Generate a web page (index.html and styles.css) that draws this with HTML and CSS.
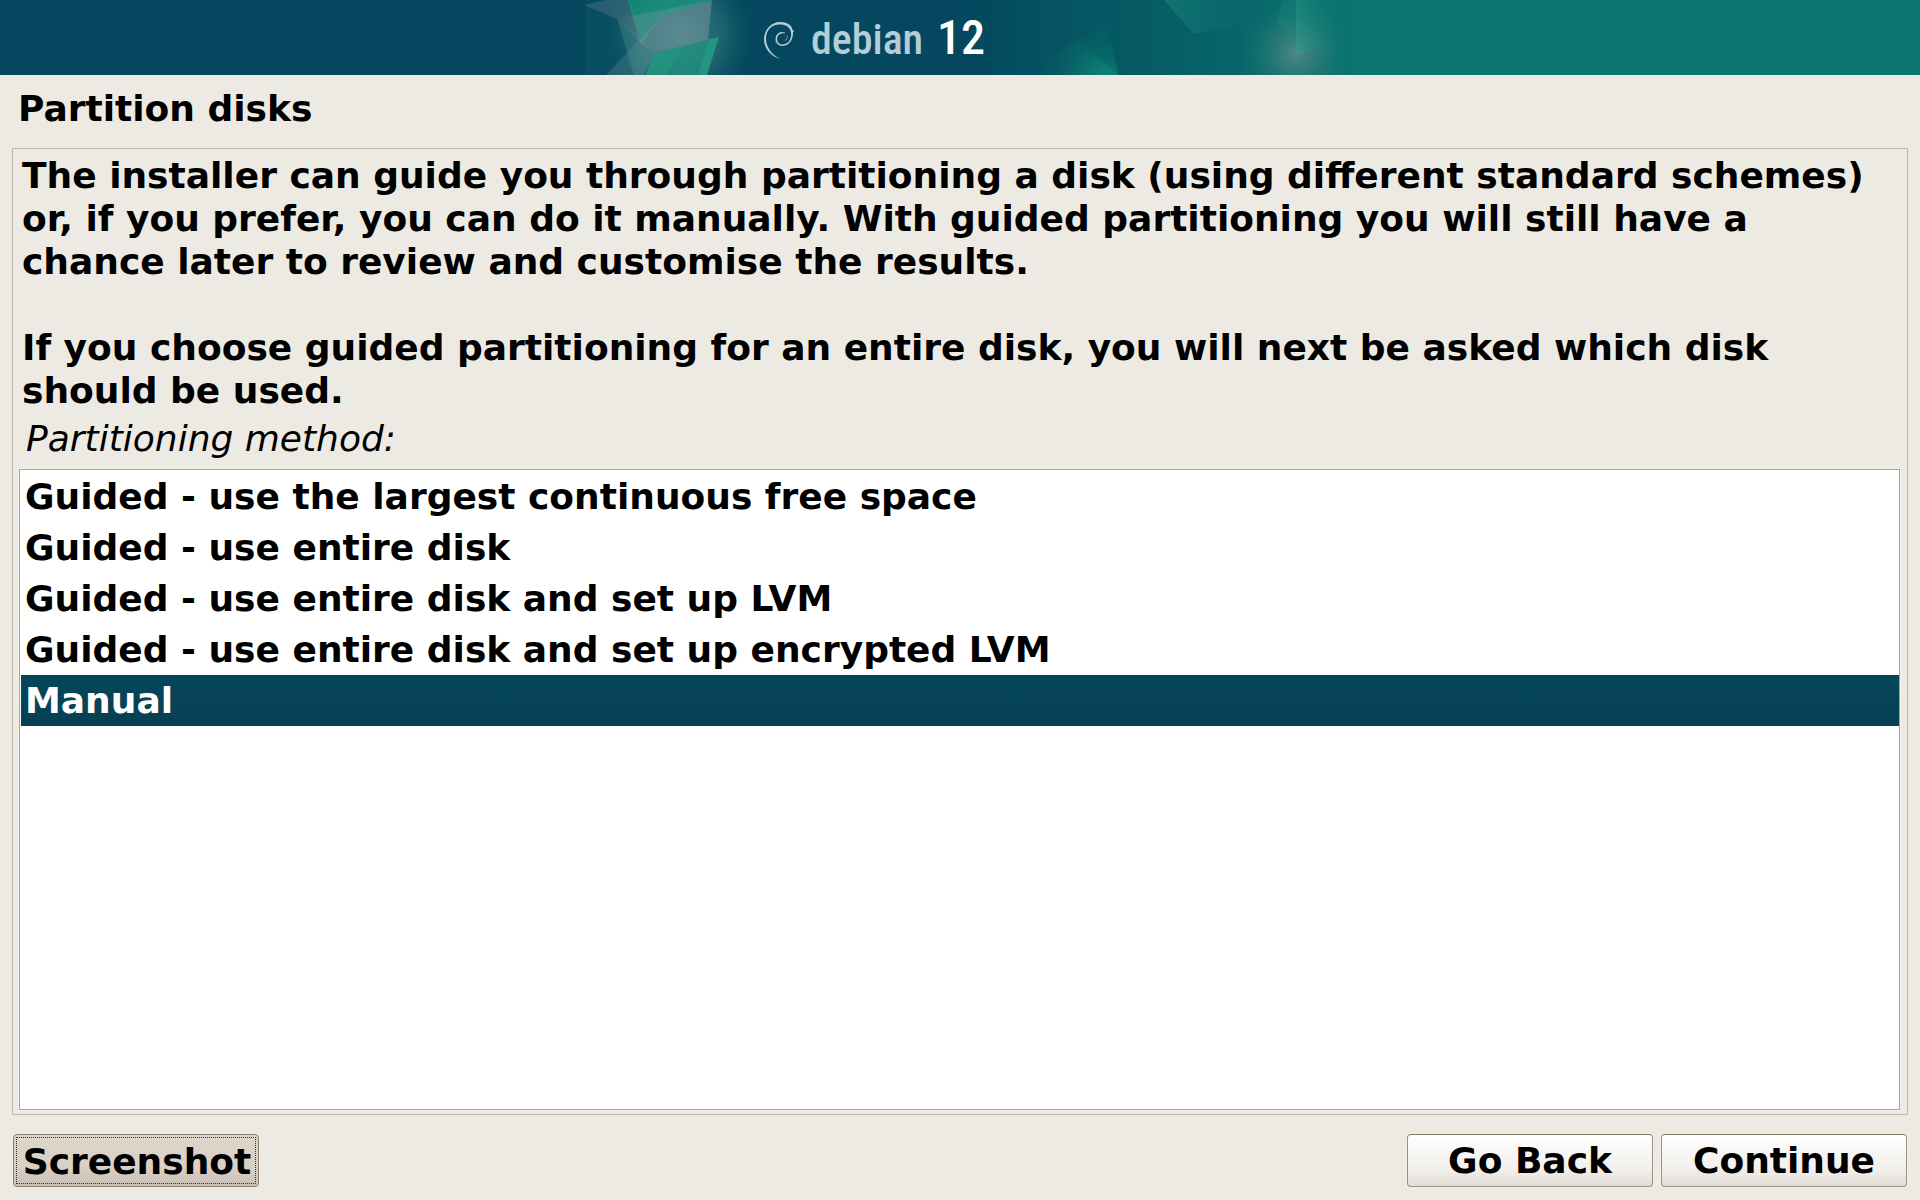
FILE: index.html
```html
<!DOCTYPE html>
<html lang="en-GB">
<head>
<meta charset="utf-8">
<meta name="viewport" content="width=device-width, initial-scale=1">
<title>Partition disks</title>
<link rel="stylesheet" href="styles.css">
</head>
<body>
<header class="banner">
  <svg class="banner-art" viewBox="0 0 800 75" role="img" aria-label="debian 12">
    <defs>
      <linearGradient id="base" x1="0" y1="0" x2="1" y2="0">
        <stop offset="0" stop-color="#04475e"/>
        <stop offset=".5" stop-color="#04475e"/>
        <stop offset=".62" stop-color="#055361"/>
        <stop offset=".8" stop-color="#076168"/>
        <stop offset="1" stop-color="#0b7570"/>
      </linearGradient>
      <radialGradient id="haze" gradientUnits="userSpaceOnUse" cx="120" cy="35" r="85">
        <stop offset="0" stop-color="#3d8a86" stop-opacity=".85"/>
        <stop offset=".5" stop-color="#2a7378" stop-opacity=".65"/>
        <stop offset="1" stop-color="#04475e" stop-opacity="0"/>
      </radialGradient>
      <radialGradient id="glow" gradientUnits="userSpaceOnUse" cx="736" cy="53" r="58">
        <stop offset="0" stop-color="#5b8d87" stop-opacity=".85"/>
        <stop offset=".5" stop-color="#3f837f" stop-opacity=".4"/>
        <stop offset="1" stop-color="#0b7570" stop-opacity="0"/>
      </radialGradient>
      <radialGradient id="spark" gradientUnits="userSpaceOnUse" cx="545" cy="78" r="70">
        <stop offset="0" stop-color="#0f9178" stop-opacity=".85"/>
        <stop offset="1" stop-color="#07616a" stop-opacity="0"/>
      </radialGradient>
      <linearGradient id="beam" x1="0" y1="0" x2="1" y2="0">
        <stop offset="0" stop-color="#219a85" stop-opacity=".4"/>
        <stop offset="1" stop-color="#0b7570" stop-opacity="0"/>
      </linearGradient>
      <linearGradient id="lit" x1="0" y1="0" x2="1" y2="0">
        <stop offset="0" stop-color="#2ba38c" stop-opacity=".45"/>
        <stop offset="1" stop-color="#0b7570" stop-opacity="0"/>
      </linearGradient>
    </defs>
    <rect width="800" height="75" fill="url(#base)"/>
    <rect x="25" width="70" height="75" fill="#0c6068" opacity=".3"/>
    <rect x="25" width="190" height="75" fill="url(#haze)"/>
    <path d="M24 5 45 0h24l6 16-18 3z" fill="#587b8d" opacity=".4"/>
    <path d="M68 0h84L101 17 81 45z" fill="#189c7e" opacity=".65"/>
    <path d="M57 19 152 0l-4 40-54 13-15-12z" fill="#8799a4" opacity=".3"/>
    <path d="M57 19 94 53l-11-8z" fill="#72909b" opacity=".4"/>
    <path d="M101 17 152 0l-4 40-54 13-11 22H46z" fill="#819da5" opacity=".25"/>
    <path d="m57 19 26 26 11 8-6 22H74z" fill="#4a9590" opacity=".35"/>
    <path d="m94 53 65-16-12 38H86z" fill="#22957f" opacity=".7"/>
    <path d="m124 46-18 29H86l8-22z" fill="#25a485" opacity=".35"/>
    <path d="m159 37-12 38h-9l11-36z" fill="#26ad86" opacity=".4"/>
    <path d="m455 75 63-35 28-19 13 54z" fill="url(#spark)"/>
    <path d="m546 21 13 54-41-35z" fill="#075761" opacity=".35"/>
    <path d="M604 0h95l-8 24-57 10z" fill="url(#beam)"/>
    <path d="M660 0h140v75H660z" fill="url(#glow)"/>
    <path d="M723 0h13v53l-19-31z" fill="#25907e" opacity=".25"/>
    <path d="M736 0h40l14 41-54 14z" fill="url(#lit)"/>
    <g fill="#b4ced7">
      <path d="M220.500 59C210 56 204 48 204 39.500 204 30 211 22 220 22c7 0 12 3 12.500 8l1.500 1-1 1.500c0 8-4 13.500-11 13.500-8-1-9-13 0-14l3 .6-.2.800c-10-1-9.500 11-2.800 11 6 0 10-5 9-12C230 27 226 24.500 219.500 24.500c-8 0-13.500 6-13.500 14 0 8 5 16 14.500 20.500z"/>
      <path d="M216 41l2 4-3-3zM227 35l1 1-1 4-3 1 2-2z" opacity=".45"/>
    </g>
    <text class="brand" x="251" y="54">debian</text>
    <text class="release" x="377" y="54">12</text>
  </svg>
</header>
<form class="installer">
  <h1 class="title">Partition disks</h1>
  <main class="panel">
    <div class="description">
      <p>The installer can guide you through partitioning a disk (using different standard schemes) or, if you prefer, you can do it manually. With guided partitioning you will still have a chance later to review and customise the results.</p>
      <p>If you choose guided partitioning for an entire disk, you will next be asked which disk should be used.</p>
    </div>
    <label class="question" for="method">Partitioning method:</label>
    <select class="choices" id="method" name="method" size="5">
      <option>Guided - use the largest continuous free space</option>
      <option>Guided - use entire disk</option>
      <option>Guided - use entire disk and set up LVM</option>
      <option>Guided - use entire disk and set up encrypted LVM</option>
      <option selected>Manual</option>
    </select>
  </main>
  <footer class="actions">
    <button class="button button-focused" type="button">Screenshot</button>
    <button class="button button-back" type="button">Go Back</button>
    <button class="button" type="submit">Continue</button>
  </footer>
</form>
</body>
</html>
```
FILE: styles.css
```css
* {
  box-sizing: border-box;
}

body {
  margin: 0;
  min-height: 100vh;
  display: flex;
  flex-direction: column;
  background: #edeae3;
  color: #000;
  font: bold 36px/43px "DejaVu Sans", sans-serif;
}

.banner {
  display: flex;
  justify-content: center;
  background: linear-gradient(90deg, #04475e 50%, #0b7570 50%);
}

.banner-art {
  display: block;
  width: 800px;
  height: 75px;
}

.brand,
.release {
  font-family: "Roboto Condensed", Roboto, sans-serif;
  font-weight: 500;
}

.brand {
  font-size: 42px;
  fill: #b4ced7;
}

.release {
  font-size: 48px;
  fill: #fff;
}

.installer {
  flex: 1;
  display: flex;
  flex-direction: column;
  padding: 12px 12px 13px;
}

.title {
  margin: 0 6px 18px;
  font-size: 36px;
}

.panel {
  flex: 1;
  display: flex;
  flex-direction: column;
  padding: 5px 7px 4px;
  border: 1px solid #c1b5a5;
}

.description {
  padding: 0 2px;
}

.description p {
  margin: 0 0 43px;
}

.description p:last-child {
  margin-bottom: 5px;
}

.question {
  padding: 0 6px;
  margin-bottom: 9px;
  font-weight: normal;
  font-style: italic;
}

.choices {
  flex: 1;
  margin: 0 0 0 -1px;
  padding: 1px 0 1px 1px;
  border: 1px solid #aca396;
  border-radius: 0;
  outline: none;
  box-shadow: 0 0 0 1px #f3efe9;
  background: #fff;
  color: #000;
  font: inherit;
  overflow: auto;
}

.choices option {
  padding: 5px 4px 3px;
  font: inherit;
  min-height: 51px;
}

.choices option:checked {
  background: linear-gradient(#04475c, #083f52);
  color: #fff;
  -webkit-text-fill-color: #fff;
}

.actions {
  display: flex;
  gap: 8px;
  padding: 0 1px;
  margin-top: 19px;
}

.button {
  width: 246px;
  height: 53px;
  padding: 0;
  border: 1px solid #9c8e7e;
  border-top-color: #857963;
  border-radius: 4px;
  box-shadow: 0 0 0 1px #f3f0ea;
  background: linear-gradient(#fff, #f1eeea 70%, #e2dcd5);
  color: #000;
  font: inherit;
}

.button-back {
  margin-left: auto;
}

.button-focused {
  padding: 2px 0 0 2px;
  border: 1px solid #8b7d6b;
  background: linear-gradient(#ddd4ca, #d9d0c6 60%, #cbc1b6);
  outline: 1px dotted #333;
  outline-offset: -4px;
}
```
